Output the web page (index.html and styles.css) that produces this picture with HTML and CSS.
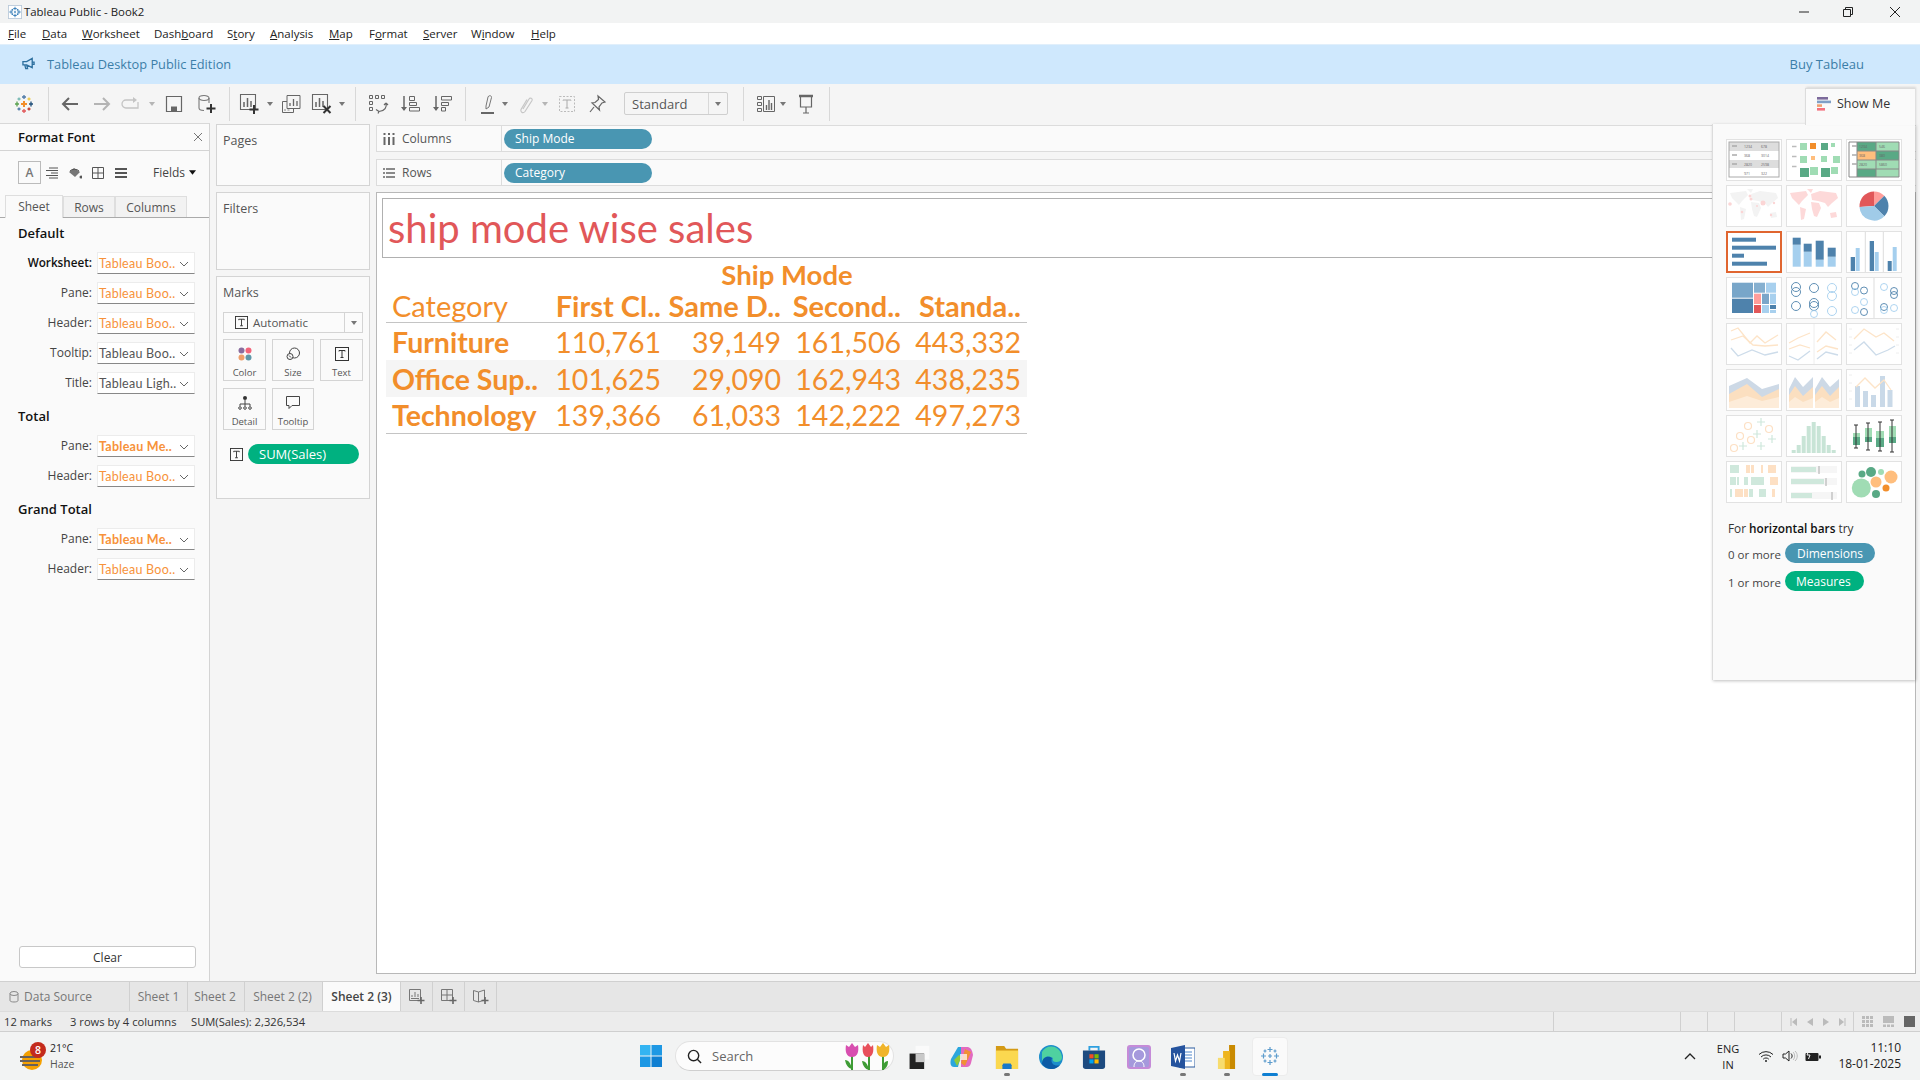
FILE: index.html
```html
<!DOCTYPE html>
<html lang="en">
<head>
<meta charset="utf-8">
<title>Tableau Public - Book2</title>
<link rel="stylesheet" href="styles.css">
</head>
<body>
<svg class="defs" width="0" height="0" aria-hidden="true">
  <defs>
    <symbol id="plus" viewBox="0 0 10 10"><path d="M5 0v10M0 5h10" stroke="currentColor" stroke-width="2"/></symbol>
    <symbol id="tt" viewBox="0 0 14 14"><rect x=".5" y=".5" width="13" height="13" fill="none" stroke="currentColor"/><path d="M4 4.500V3.500h6v1M7 3.500v7M5.500 10.500h3" fill="none" stroke="currentColor"/></symbol>
    <symbol id="chev" viewBox="0 0 10 6"><path d="M1 1l4 4 4-4" fill="none" stroke="#666"/></symbol>
    <symbol id="drop" viewBox="0 0 6 4"><path d="M0 0h6L3 4z" fill="#777"/></symbol>
    <symbol id="world" viewBox="0 0 56 42"><path d="M4 8L20 6 22 10 16 16 13 20 10 17 6 13zM14 22L20 24 18 34 15 35zM25 9L34 6 50 8 52 13 46 18 42 22 39 18 32 16 26 15zM25 17L33 18 35 23 31 32 28 31 26 24zM44 28L50 27 51 32 45 33zM21 4L27 4 25 8z"/></symbol>
  </defs>
</svg>
<div class="app">
  <header class="titlebar">
    <svg class="title-ico" viewBox="0 0 16 16"><rect x=".5" y=".5" width="15" height="15" fill="#fff" stroke="#b9c9d9"/><path d="M8 2v4M6 4h4M8 10v4M6 12h4M3.500 6v4M1.500 8h4M12.500 6v4M10.500 8h4M5 4.500v2M4 5.500h2M11 4.500v2M10 5.500h2M5 9.500v2M4 10.500h2M11 9.500v2M10 10.500h2M8 7v2M7 8h2" stroke="#2e78b5" stroke-width="1"/></svg>
    <span class="title-text">Tableau Public - Book2</span>
    <div class="winctl">
      <svg class="wc-min" viewBox="0 0 10 10"><path d="M0 5h10" stroke="#222"/></svg>
      <svg class="wc-max" viewBox="0 0 10 10"><path d="M.5 2.500h7v7h-7zM2.500 2.500v-2h7v7h-2" fill="none" stroke="#222"/></svg>
      <svg class="wc-close" viewBox="0 0 10 10"><path d="M0 0l10 10M10 0L0 10" stroke="#222"/></svg>
    </div>
  </header>

  <nav class="menubar">
    <span class="m m-file"><u>F</u>ile</span>
    <span class="m m-data"><u>D</u>ata</span>
    <span class="m m-ws"><u>W</u>orksheet</span>
    <span class="m m-db">Dash<u>b</u>oard</span>
    <span class="m m-st">S<u>t</u>ory</span>
    <span class="m m-an"><u>A</u>nalysis</span>
    <span class="m m-map"><u>M</u>ap</span>
    <span class="m m-fo">F<u>o</u>rmat</span>
    <span class="m m-se"><u>S</u>erver</span>
    <span class="m m-wi">W<u>i</u>ndow</span>
    <span class="m"><u>H</u>elp</span>
  </nav>

  <div class="banner">
    <svg class="mega" viewBox="0 0 14 14"><path d="M1 5h4l6-3.500v10L5 8.500H1zM3 8.500l1 4h2l-1-4M11 5.500h2v2.500h-2" fill="none" stroke="#2d6f9e" stroke-width="1.400"/></svg>
    <span class="banner-text">Tableau Desktop Public Edition</span>
    <span class="buy">Buy Tableau</span>
  </div>

  <div class="toolbar">
    <svg class="ti" viewBox="0 0 20 20"><g stroke-width="1.300"><path d="M10 7v6M7 10h6" stroke="#f28e2b" stroke-width="2"/><path d="M10 1v4M8 3h4" stroke="#4e79a7"/><path d="M10 15v4M8 17h4" stroke="#e15759"/><path d="M3 7.500v5M1 10h4" stroke="#59a14f"/><path d="M17 7.500v5M15 10h4" stroke="#1f4e79"/><path d="M5 3.500v3M3.500 5h3" stroke="#76b7b2"/><path d="M15 3.500v3M13.500 5h3" stroke="#edc948"/><path d="M5 13.500v3M3.500 15h3" stroke="#4e79a7"/><path d="M15 13.500v3M13.500 15h3" stroke="#c0392b"/></g></svg>
    <i class="sep"></i>
    <svg class="ti" viewBox="0 0 20 20"><path d="M18 10H3M9 4l-6 6 6 6" fill="none" stroke="#666" stroke-width="2"/></svg>
    <svg class="ti" viewBox="0 0 20 20"><path d="M2 10h15M11 4l6 6-6 6" fill="none" stroke="#b4b4b4" stroke-width="2"/></svg>
    <svg class="ti" viewBox="0 0 20 20"><path d="M14 6H5a3.500 3.500 0 0 0 0 8h12V8" fill="none" stroke="#c4c4c4" stroke-width="1.300"/><path d="M12 3l4 3-4 3z" fill="#c4c4c4"/></svg>
    <svg class="td" viewBox="0 0 6 4"><use href="#drop" class="dim"/></svg>
    <svg class="ti" viewBox="0 0 20 20"><path d="M2.500 2.500h15v15h-15z" fill="none" stroke="#666" stroke-width="1.200"/><path d="M7 12.500h6v5H7z" fill="#666"/></svg>
    <svg class="ti" viewBox="0 0 20 20"><ellipse cx="7" cy="4" rx="5" ry="2.500" fill="none" stroke="#777" stroke-width="1.100"/><path d="M2 4v10c0 2 2 2.500 5 2.500M12 4v5" fill="none" stroke="#777" stroke-width="1.100"/><path d="M14 10v9M9.500 14.500h9" stroke="#333" stroke-width="2"/></svg>
    <i class="sep"></i>
    <svg class="ti" viewBox="0 0 20 20"><path d="M.5 .5h15v15H.5z" fill="none" stroke="#666" stroke-width="1.100"/><path d="M4 8v5M7.500 4v9M11 7v6" stroke="#666" stroke-width="1.500"/><path d="M14 11v9M9.500 15.500h9" stroke="#333" stroke-width="2"/></svg>
    <svg class="td" viewBox="0 0 6 4"><use href="#drop"/></svg>
    <svg class="ti" viewBox="0 0 20 20"><path d="M6 1.500h13v13H6z" fill="#f5f5f5" stroke="#666"/><path d="M9 9v3M12.500 5v7M16 7v5" stroke="#666" stroke-width="1.300"/><path d="M1.500 7.500H6M1.500 7.500v11h11v-4" fill="none" stroke="#666"/><path d="M3 16h2M6.500 16h2" stroke="#888"/></svg>
    <svg class="ti" viewBox="0 0 20 20"><path d="M.5 .5h15v15H.5z" fill="none" stroke="#666" stroke-width="1.100"/><path d="M4 8v5M7.500 4v9M11 7v6" stroke="#666" stroke-width="1.500"/><path d="M11.500 12l7 7M18.500 12l-7 7" stroke="#333" stroke-width="2"/></svg>
    <svg class="td" viewBox="0 0 6 4"><use href="#drop"/></svg>
    <i class="sep"></i>
    <svg class="ti" viewBox="0 0 20 20"><g fill="none" stroke="#666"><path d="M1.500 1.500h3v3h-3zM7.500 1.500h3v3h-3zM13.500 1.500h3v3h-3zM1.500 7.500h3v3h-3zM1.500 13.500h3v3h-3z"/><path d="M18 9c1 4-1 8-7 8.500M8 15.500l3 2-1 2M18 9l-2 2M18 9l2 2" stroke-width="1.200"/></g></svg>
    <svg class="ti" viewBox="0 0 20 20"><path d="M4 2v14" stroke="#666" stroke-width="1.500"/><path d="M1 13l3 4 3-4z" fill="#666"/><path d="M9.500 2.500h5v4h-5zM9.500 8.500h7v3h-7zM9.500 13.500h10v3.500h-10z" fill="none" stroke="#666"/></svg>
    <svg class="ti" viewBox="0 0 20 20"><path d="M4 2v14" stroke="#666" stroke-width="1.500"/><path d="M1 13l3 4 3-4z" fill="#666"/><path d="M9.500 2.500h10v3.500h-10zM9.500 8.500h7v3h-7zM9.500 13.500h4v3.500h-4z" fill="none" stroke="#666"/></svg>
    <i class="sep"></i>
    <svg class="ti" viewBox="0 0 20 20"><path d="M8 12l2-9c.5-2 4-1.500 3.500.5L11 13l-3 2z" fill="none" stroke="#777"/><path d="M3 19h13" stroke="#666" stroke-width="2"/></svg>
    <svg class="td" viewBox="0 0 6 4"><use href="#drop"/></svg>
    <svg class="ti" viewBox="0 0 20 20"><path d="M7 15l6-10c1-2 4-.5 3 1.500l-7 11c-2 2.500-5 .5-4-2l6-10" fill="none" stroke="#c6c6c6" stroke-width="1.200"/></svg>
    <svg class="td" viewBox="0 0 6 4"><use href="#drop" class="dim"/></svg>
    <svg class="ti" viewBox="0 0 20 20"><rect x="2.500" y="2.500" width="15" height="15" fill="none" stroke="#bbb" stroke-dasharray="2 1.500"/><path d="M6 6.500V6h8v.5M10 6v8M8.500 14h3" fill="none" stroke="#aaa"/></svg>
    <svg class="ti" viewBox="0 0 20 20"><path d="M11 2l7 6-3 1-3 4 .5 3-7.500-7 3-.5 3.500-3zM7 13l-4 5" fill="none" stroke="#666" stroke-width="1.200"/></svg>
    <div class="fit"><span class="fit-label">Standard</span><span class="fit-arrow"><svg class="td" viewBox="0 0 6 4"><use href="#drop"/></svg></span></div>
    <i class="sep"></i>
    <svg class="ti" viewBox="0 0 20 20"><path d="M1.500 2.500h4v3h-4zM1.500 8.500h4v3h-4zM1.500 14.500h4v3h-4zM7.500 2.500h11v15h-11z" fill="none" stroke="#666"/><path d="M10.500 11v5M13 6v10M15.500 9v7" stroke="#666" stroke-width="1.400"/></svg>
    <svg class="td" viewBox="0 0 6 4"><use href="#drop"/></svg>
    <svg class="ti" viewBox="0 0 20 20"><path d="M3 2h14" stroke="#666" stroke-width="2.500"/><path d="M4.500 3v10h11V3M10 13v6M7 19h6" fill="none" stroke="#666" stroke-width="1.200"/></svg>
    <i class="sep"></i>
  </div>

  <main class="main">
    <aside class="format">
      <div class="fmt-head"><strong>Format Font</strong><svg class="fmt-x" viewBox="0 0 8 8"><path d="M0 0l8 8M8 0L0 8" stroke="#777"/></svg></div>
      <div class="fmt-tools">
        <span class="fmt-a">A</span>
        <svg class="fi" viewBox="0 0 14 14"><path d="M4 2h9M1 4.500h12M6 7h7M1 9.500h12M4 12h9" stroke="#555"/></svg>
        <svg class="fi" viewBox="0 0 14 14"><path d="M1 6l5-4 6 4-5 5z" fill="#777"/><path d="M2 5a5 3 0 0 1 9 0" fill="none" stroke="#555"/><circle cx="13" cy="11" r="1.500" fill="#555"/></svg>
        <svg class="fi" viewBox="0 0 14 14"><path d="M1.500 1.500h11v11h-11zM7 1.500v11M1.500 7h11" fill="none" stroke="#555"/></svg>
        <svg class="fi" viewBox="0 0 14 14"><path d="M1 3h12M1 7h12M1 11h12" stroke="#555" stroke-width="2"/></svg>
        <span class="fmt-fields">Fields<svg class="fields-drop" viewBox="0 0 6 4"><path d="M0 0h6L3 4z" fill="#111"/></svg></span>
      </div>
      <div class="fmt-tabs">
        <span class="ftab ftab-on">Sheet</span>
        <span class="ftab ftab-rows">Rows</span>
        <span class="ftab ftab-cols">Columns</span>
      </div>
      <div class="fmt-body">
        <h3 class="fmt-h">Default</h3>
        <div class="frow"><label class="flabel flabel-on">Worksheet:</label><div class="fsel o">Tableau Boo..<svg class="chev"><use href="#chev"/></svg></div></div>
        <div class="frow"><label class="flabel">Pane:</label><div class="fsel o">Tableau Boo..<svg class="chev"><use href="#chev"/></svg></div></div>
        <div class="frow"><label class="flabel">Header:</label><div class="fsel o">Tableau Boo..<svg class="chev"><use href="#chev"/></svg></div></div>
        <div class="frow"><label class="flabel">Tooltip:</label><div class="fsel">Tableau Boo..<svg class="chev"><use href="#chev"/></svg></div></div>
        <div class="frow"><label class="flabel">Title:</label><div class="fsel">Tableau Ligh..<svg class="chev"><use href="#chev"/></svg></div></div>
        <h3 class="fmt-h fmt-h2">Total</h3>
        <div class="frow"><label class="flabel">Pane:</label><div class="fsel o b">Tableau Me..<svg class="chev"><use href="#chev"/></svg></div></div>
        <div class="frow"><label class="flabel">Header:</label><div class="fsel o">Tableau Boo..<svg class="chev"><use href="#chev"/></svg></div></div>
        <h3 class="fmt-h fmt-h2">Grand Total</h3>
        <div class="frow"><label class="flabel">Pane:</label><div class="fsel o b">Tableau Me..<svg class="chev"><use href="#chev"/></svg></div></div>
        <div class="frow"><label class="flabel">Header:</label><div class="fsel o">Tableau Boo..<svg class="chev"><use href="#chev"/></svg></div></div>
      </div>
      <button class="clear">Clear</button>
    </aside>

    <section class="cards">
      <div class="card card-pages"><span class="card-t">Pages</span></div>
      <div class="card card-filters"><span class="card-t">Filters</span></div>
      <div class="card card-marks">
        <span class="card-t">Marks</span>
        <div class="markdrop"><svg class="mt"><use href="#tt"/></svg><span>Automatic</span><span class="markdrop-arrow"><svg class="md"><use href="#drop"/></svg></span></div>
        <div class="markgrid">
          <div class="mbtn"><svg class="mi" viewBox="0 0 14 14"><circle cx="3.500" cy="3.500" r="3" fill="#8a6d9e"/><circle cx="10.500" cy="3.500" r="3" fill="#f2647a"/><circle cx="3.500" cy="10.500" r="3" fill="#ee9f6b"/><circle cx="10.500" cy="10.500" r="3" fill="#5f97a8"/></svg><span>Color</span></div>
          <div class="mbtn"><svg class="mi" viewBox="0 0 14 14"><circle cx="8.500" cy="6" r="5" fill="none" stroke="#444"/><circle cx="4" cy="9.500" r="3" fill="#f9f9f9" stroke="#444"/><path d="M3 8.500l2 2" stroke="#444"/></svg><span>Size</span></div>
          <div class="mbtn"><svg class="mi"><use href="#tt"/></svg><span>Text</span></div>
          <div class="mbtn"><svg class="mi" viewBox="0 0 14 14"><circle cx="7" cy="2" r="2" fill="#333"/><path d="M7 4v4M2 10V8h10v2M7 8v2" fill="none" stroke="#444"/><circle cx="2" cy="12" r="1.300" fill="none" stroke="#444"/><circle cx="7" cy="12" r="1.300" fill="none" stroke="#444"/><circle cx="12" cy="12" r="1.300" fill="none" stroke="#444"/></svg><span>Detail</span></div>
          <div class="mbtn"><svg class="mi" viewBox="0 0 14 14"><path d="M.5 .5h13v9H6l-3 3v-3H.5z" fill="none" stroke="#444"/></svg><span>Tooltip</span></div>
        </div>
        <div class="markpill"><svg class="mt"><use href="#tt"/></svg><span class="pill pill-g pill-sum">SUM(Sales)</span></div>
      </div>
    </section>

    <section class="work">
      <div class="shelf"><div class="shelf-l"><svg class="si" viewBox="0 0 12 12"><path d="M1.500 4v8M6 4v8M10.500 4v8M1.500 0v2M6 0v2M10.500 0v2" stroke="#666" stroke-width="2"/></svg>Columns</div><span class="pill pill-b pill-shelf">Ship Mode</span></div>
      <div class="shelf shelf-r"><div class="shelf-l"><svg class="si" viewBox="0 0 12 12"><path d="M3 2h9M3 6h9M3 10h9M0 2h2M0 6h2M0 10h2" stroke="#666" stroke-width="1.500"/></svg>Rows</div><span class="pill pill-b pill-shelf">Category</span></div>
      <div class="canvas">
        <div class="vtitle">ship mode wise sales</div>
        <div class="tbl">
          <div class="tr tr-top"><span class="shipmode">Ship Mode</span></div>
          <div class="tr tr-head"><span class="cat">Category</span><b>First Cl..</b><b>Same D..</b><b>Second..</b><b>Standa..</b></div>
          <div class="tr"><b class="rl">Furniture</b><span>110,761</span><span>39,149</span><span>161,506</span><span>443,332</span></div>
          <div class="tr tr-band"><b class="rl">Office Sup..</b><span>101,625</span><span>29,090</span><span>162,943</span><span>438,235</span></div>
          <div class="tr tr-last"><b class="rl">Technology</b><span>139,366</span><span>61,033</span><span>142,222</span><span>497,273</span></div>
        </div>
      </div>
    </section>

    <aside class="showme">
      <div class="sm-tab"><svg class="sm-ico" viewBox="0 0 14 14"><rect width="11" height="2.600" fill="#7d6b9c"/><rect y="3.600" width="14" height="2.600" fill="#7f9fc6"/><rect y="7.300" width="5" height="2.600" fill="#f0a070"/><rect y="11" width="8" height="2.600" fill="#f4717f"/></svg>Show Me</div>
      <div class="sm-grid">
        <svg class="thumb" viewBox="0 0 56 42"><rect class="fr" x=".5" y=".5" width="55" height="41"/><rect x="3" y="3" width="50" height="9" fill="#ddd"/><rect x="3" y="21" width="50" height="8" fill="#ddd"/><rect x="3" y="3" width="50" height="35" fill="none" stroke="#aaa"/><path d="M6 7h5M6 16h5M6 25h5" stroke="#aaa" stroke-width="1.500"/><g class="tiny"><text x="18" y="9">1234</text><text x="35" y="9">678</text><text x="18" y="18">368</text><text x="35" y="18">3014</text><text x="18" y="27">2820</text><text x="35" y="27">2598</text><text x="18" y="36">971</text><text x="35" y="36">322</text></g></svg>
        <svg class="thumb" viewBox="0 0 56 42"><rect class="fr" x=".5" y=".5" width="55" height="41"/><path d="M6 7.500h4.500M6 17.500h4.500M6 27.500h4.500" stroke="#bbb" stroke-width="1.500"/><g fill="#a0dcb4"><rect x="14" y="4" width="7" height="7"/><rect x="45" y="4" width="4" height="4"/><rect x="14" y="17" width="7" height="7"/><rect x="35" y="17" width="6" height="6"/><rect x="47" y="17" width="7" height="7"/><rect x="24" y="28" width="8" height="8"/><rect x="45" y="28" width="7" height="7"/></g><g fill="#59a985"><rect x="35" y="4" width="7" height="7"/><rect x="14" y="29" width="9" height="9"/><rect x="35" y="29" width="9" height="9"/></g><rect x="24" y="4" width="6" height="6" fill="#f28e2b"/><rect x="25" y="17" width="4" height="4" fill="#ffbe7d"/></svg>
        <svg class="thumb" viewBox="0 0 56 42"><rect class="fr" x=".5" y=".5" width="55" height="41"/><rect x="11" y="3" width="19" height="9" fill="#59a985"/><rect x="30" y="3" width="23" height="9" fill="#a0dcb4"/><rect x="11" y="12" width="19" height="9" fill="#ffbe7d"/><rect x="30" y="12" width="23" height="9" fill="#59a985"/><rect x="11" y="21" width="19" height="9" fill="#a0dcb4"/><rect x="30" y="21" width="23" height="9" fill="#a0dcb4"/><rect x="11" y="30" width="19" height="8" fill="#59a985"/><rect x="30" y="30" width="23" height="8" fill="#a0dcb4"/><path d="M3 3h50v35H3zM11 3v35M30 3v35M11 12h42M11 21h42M11 30h42" fill="none" stroke="#888"/><path d="M6 7h5M6 16h5M6 25h5" stroke="#aaa" stroke-width="1.500"/><g class="tiny"><text x="13" y="9">1234</text><text x="33" y="9">546</text><text x="13" y="18">368</text><text x="33" y="18">380</text><text x="13" y="27">2820</text><text x="33" y="27">5860</text></g></svg>
        <svg class="thumb" viewBox="0 0 56 42"><rect class="fr" x=".5" y=".5" width="55" height="41"/><use href="#world" width="56" height="42" fill="#f3f3f3"/><g fill="#fbd5d5"><circle cx="37" cy="18" r="2.500"/><circle cx="25" cy="14" r="1.500"/><circle cx="24" cy="11" r="1.500"/><circle cx="4" cy="19" r="1.800"/><circle cx="45" cy="30" r="1.200"/><circle cx="16" cy="27" r="1.300"/><circle cx="31" cy="21" r="1"/><circle cx="48" cy="18" r="1.200"/></g></svg>
        <svg class="thumb" viewBox="0 0 56 42"><rect class="fr" x=".5" y=".5" width="55" height="41"/><use href="#world" width="56" height="42" fill="#fdd9d9"/></svg>
        <svg class="thumb" viewBox="0 0 56 42"><rect class="fr" x=".5" y=".5" width="55" height="41"/><path d="M28 21L13.500 22A14.500 14.500 0 0 1 28 6.500z" fill="#e15759"/><path d="M28 21V6.500A14.500 14.500 0 0 1 38.300 10.800z" fill="#ff9d9a"/><path d="M28 21L38.300 10.800A14.500 14.500 0 0 1 38.300 31.200z" fill="#4e82ac"/><path d="M28 21L38.300 31.200A14.500 14.500 0 0 1 13.500 22z" fill="#a0cbe8"/></svg>

        <svg class="thumb" viewBox="0 0 56 42"><rect x="1" y="1" width="54" height="40" fill="#fff" stroke="#e0652f" stroke-width="2"/><g fill="#4e82ac"><rect x="6" y="6.700" width="24" height="4"/><rect x="6" y="14.700" width="44" height="4"/><rect x="6" y="22.700" width="12" height="4"/><rect x="6" y="30.700" width="35" height="4"/></g></svg>
        <svg class="thumb" viewBox="0 0 56 42"><rect class="fr" x=".5" y=".5" width="55" height="41"/><g fill="#a5cfee"><rect x="6.700" y="13.700" width="8" height="22"/><rect x="17.700" y="20.700" width="8" height="15"/><rect x="29.700" y="28.700" width="8" height="7"/><rect x="41.700" y="25.700" width="8" height="10"/></g><g fill="#4e82ac"><rect x="6.700" y="6.700" width="8" height="7"/><rect x="17.700" y="12.700" width="8" height="8"/><rect x="29.700" y="9.700" width="8" height="19"/><rect x="41.700" y="16.700" width="8" height="9"/></g></svg>
        <svg class="thumb" viewBox="0 0 56 42"><rect class="fr" x=".5" y=".5" width="55" height="41"/><path d="M19.300 1v40M37.300 1v40" stroke="#ddd"/><g fill="#4e82ac"><rect x="4.700" y="26" width="4.300" height="14"/><rect x="23.700" y="10" width="4.300" height="30"/><rect x="41.700" y="30" width="4" height="10"/></g><g fill="#a5cfee"><rect x="9.700" y="17" width="4" height="23"/><rect x="28.700" y="21" width="4" height="19"/><rect x="46.700" y="16" width="4" height="24"/></g></svg>
        <svg class="thumb" viewBox="0 0 56 42"><rect class="fr" x=".5" y=".5" width="55" height="41"/><rect x="6" y="5.700" width="21" height="15" fill="#78a6c9"/><rect x="6" y="21.700" width="21" height="14.300" fill="#4e82ac"/><rect x="28" y="5.700" width="11" height="10" fill="#86b0d0"/><rect x="40" y="5.700" width="10" height="10" fill="#a8d0ee"/><rect x="28" y="16.700" width="7" height="10.300" fill="#ff9d9a"/><rect x="36" y="16.700" width="7" height="10.300" fill="#7ba6c9"/><rect x="44" y="16.700" width="6" height="10.300" fill="#a8d0ee"/><rect x="28" y="28" width="7" height="8" fill="#e15759"/><rect x="36" y="28" width="7" height="8" fill="#a8d0ee"/><rect x="44" y="28" width="6" height="4" fill="#4e82ac"/><rect x="44" y="33" width="6" height="3" fill="#a8d0ee"/></svg>
        <svg class="thumb" viewBox="0 0 56 42"><rect class="fr" x=".5" y=".5" width="55" height="41"/><g fill="none" stroke="#4e82ac" stroke-width=".9"><circle cx="10" cy="10" r="4.500"/><circle cx="10" cy="15" r="4.500"/><circle cx="10" cy="29" r="4.500"/><circle cx="28" cy="11" r="4.500"/><circle cx="28" cy="26" r="4.500"/><circle cx="28" cy="29" r="4.500"/></g><g fill="none" stroke="#a5cfee" stroke-width=".9"><circle cx="46" cy="11" r="4.500"/><circle cx="46" cy="19" r="4.500"/><circle cx="46" cy="34" r="4.500"/><circle cx="28" cy="37" r="3.500"/></g></svg>
        <svg class="thumb" viewBox="0 0 56 42"><rect class="fr" x=".5" y=".5" width="55" height="41"/><path d="M28 1v40" stroke="#ddd"/><g fill="none" stroke="#4e82ac" stroke-width=".9"><circle cx="9" cy="9" r="3.500"/><circle cx="18" cy="13.500" r="3.500"/><circle cx="18" cy="35" r="3.500"/><circle cx="48" cy="14" r="3.500"/><circle cx="48" cy="18" r="3.500"/><circle cx="38" cy="30" r="3.500"/></g><g fill="none" stroke="#a5cfee" stroke-width=".9"><circle cx="9" cy="15" r="3.500"/><circle cx="18" cy="25" r="3.500"/><circle cx="9" cy="33" r="3.500"/><circle cx="38" cy="10" r="3.500"/><circle cx="38" cy="33" r="3.500"/><circle cx="48" cy="31" r="3.500"/></g></svg>

        <svg class="thumb" viewBox="0 0 56 42"><rect class="fr" x=".5" y=".5" width="55" height="41"/><g class="ln"><polyline class="lo" points="5,8 12,5 24,20 31,13 39,20 52,12"/><polyline class="lo" points="5,17 17,13 27,22 39,23 52,22"/><polyline class="lb" points="5,25 12,33 26,27 39,32 52,29"/></g></svg>
        <svg class="thumb" viewBox="0 0 56 42"><rect class="fr" x=".5" y=".5" width="55" height="41"/><path d="M28 1v40" stroke="#eee"/><g class="ln"><polyline class="lo" points="3,20 12,15 24,10"/><polyline class="lo" points="3,26 14,22 24,25"/><polyline class="lb" points="3,33 12,37 24,28"/><polyline class="lo" points="31,19 40,9 50,17"/><polyline class="lo" points="31,29 40,23 52,26"/><polyline class="lb" points="31,36 40,29 52,32"/></g></svg>
        <svg class="thumb" viewBox="0 0 56 42"><rect class="fr" x=".5" y=".5" width="55" height="41"/><path d="M3 6h3M3 14h3M3 22h3M3 30h3M50 6h3M50 14h3M50 22h3M50 30h3" stroke="#eee"/><g class="ln"><polyline class="lo" points="8,16 18,6 30,14 38,10 48,18"/><polyline class="lb" points="8,27 18,19 30,32 42,27 49,23"/></g></svg>

        <svg class="thumb" viewBox="0 0 56 42"><rect class="fr" x=".5" y=".5" width="55" height="41"/><path d="M3 17L21 9 36 20 53 15V39H3z" fill="#cdd9e6"/><path d="M3 25L21 15 36 28 53 20V39H3z" fill="#fbdfc0"/><path d="M3 33L21 27 36 32 53 28V39H3z" fill="#fdecd9"/></svg>
        <svg class="thumb" viewBox="0 0 56 42"><rect class="fr" x=".5" y=".5" width="55" height="41"/><path d="M3 20L9 8 17 18 27 8V39H3z" fill="#cdd9e6"/><path d="M3 26L9 17 17 27 27 18V39H3z" fill="#fbdfc0"/><path d="M3 33L9 28 17 33 27 29V39H3z" fill="#fdecd9"/><path d="M29 20L36 8 44 18 53 10V39H29z" fill="#cdd9e6"/><path d="M29 26L36 17 44 27 53 18V39H29z" fill="#fbdfc0"/><path d="M29 33L36 28 44 33 53 29V39H29z" fill="#fdecd9"/></svg>
        <svg class="thumb" viewBox="0 0 56 42"><rect class="fr" x=".5" y=".5" width="55" height="41"/><path d="M3 6h3M3 14h3M3 22h3M3 30h3" stroke="#eee"/><g fill="#c9d9e8"><rect x="9" y="17" width="5" height="21"/><rect x="17" y="22" width="5" height="16"/><rect x="25" y="26" width="5" height="12"/><rect x="34" y="7" width="5" height="31"/><rect x="41.500" y="21" width="5" height="17"/></g><polyline class="lo" fill="none" points="10,18 19,9 29,19 38,11 45,21"/></svg>

        <svg class="thumb" viewBox="0 0 56 42"><rect class="fr" x=".5" y=".5" width="55" height="41"/><g fill="none" stroke="#fde0c4" stroke-width="1.200"><circle cx="8" cy="33" r="3.500"/><circle cx="14" cy="21" r="3.500"/><circle cx="22" cy="11" r="3.500"/><circle cx="25" cy="25" r="3.500"/><circle cx="43" cy="14" r="3.500"/></g><path d="M31 7h8M35 3v8M27 19h8M31 15v8M13 31h8M17 27v8M31 31h8M35 27v8M42 24h8M46 20v8" stroke="#cfe8dc" stroke-width="1.200"/></svg>
        <svg class="thumb" viewBox="0 0 56 42"><rect class="fr" x=".5" y=".5" width="55" height="41"/><g fill="#c8e4d6"><rect x="5.700" y="35" width="4" height="3"/><rect x="10.700" y="30" width="4" height="8"/><rect x="15.700" y="21" width="4" height="17"/><rect x="20.700" y="11" width="4" height="27"/><rect x="25.700" y="7" width="4" height="31"/><rect x="30.700" y="11" width="4" height="27"/><rect x="35.700" y="21" width="4" height="17"/><rect x="40.700" y="30" width="4" height="8"/><rect x="45.700" y="35" width="4" height="3"/></g></svg>
        <svg class="thumb" viewBox="0 0 56 42"><rect class="fr" x=".5" y=".5" width="55" height="41"/><g fill="#a0dcb4"><rect x="7" y="18" width="7" height="4"/><rect x="19" y="13" width="7" height="9"/><rect x="30" y="16" width="8" height="7"/><rect x="43" y="11" width="7" height="11"/></g><g fill="#59a985"><rect x="7" y="22" width="7" height="8"/><rect x="19" y="22" width="7" height="5"/><rect x="30" y="23" width="8" height="9"/><rect x="43" y="22" width="7" height="6"/></g><path d="M10 10v23M8 10h4M8 33h4M22 8v27M20 8h4M20 35h4M34 7v29M32 7h4M32 36h4M46 5v32M44 5h4M44 37h4" stroke="#333" fill="none"/></svg>

        <svg class="thumb" viewBox="0 0 56 42"><rect class="fr" x=".5" y=".5" width="55" height="41"/><g fill="#cfe8dc"><rect x="4" y="4" width="9" height="8"/><rect x="4" y="16" width="6" height="8"/><rect x="11" y="16" width="2" height="8"/><rect x="18" y="16" width="4" height="8"/><rect x="25" y="16" width="13" height="8"/><rect x="4" y="28" width="2" height="8"/><rect x="23" y="28" width="4" height="8"/><rect x="33" y="28" width="7" height="8"/></g><g fill="#fde0c4"><rect x="20" y="4" width="4" height="8"/><rect x="25" y="4" width="3" height="8"/><rect x="35" y="4" width="2" height="8"/><rect x="42" y="4" width="8" height="8"/><rect x="44" y="16" width="8" height="8"/><rect x="9" y="28" width="8" height="8"/><rect x="18" y="28" width="4" height="8"/><rect x="46" y="28" width="3" height="8"/></g></svg>
        <svg class="thumb" viewBox="0 0 56 42"><rect class="fr" x=".5" y=".5" width="55" height="41"/><g fill="#f6f6f6"><rect x="5" y="5" width="46" height="7"/><rect x="5" y="17" width="46" height="7"/><rect x="5" y="31" width="46" height="7"/></g><g fill="#cfe8dc"><rect x="5" y="6" width="25" height="5"/><rect x="5" y="18" width="33" height="5"/><rect x="5" y="32" width="21" height="5"/></g><path d="M33 5v8M40 17v8M46 31v8" stroke="#aaa"/></svg>
        <svg class="thumb" viewBox="0 0 56 42"><rect class="fr" x=".5" y=".5" width="55" height="41"/><circle cx="15.300" cy="27" r="9.500" fill="#a0dcb4"/><circle cx="16" cy="13" r="3.500" fill="#59a985"/><circle cx="25" cy="11" r="5" fill="#59a985"/><circle cx="35" cy="11" r="3" fill="#a0dcb4"/><circle cx="45" cy="16" r="6.500" fill="#ffbe7d"/><circle cx="30" cy="21" r="5.500" fill="#ffbe7d"/><circle cx="40" cy="27" r="3.500" fill="#f28e2b"/><circle cx="30" cy="33" r="4" fill="#59a985"/></svg>
      </div>
      <p class="sm-for">For <b>horizontal bars</b> try</p>
      <div class="sm-row"><span class="sm-n">0 or more</span><span class="pill pill-b pill-dim">Dimensions</span></div>
      <div class="sm-row"><span class="sm-n">1 or more</span><span class="pill pill-g pill-mea">Measures</span></div>
    </aside>
  </main>

  <div class="tabs">
    <span class="tab tab-ds"><svg class="ds" viewBox="0 0 10 12"><ellipse cx="5" cy="2.500" rx="4" ry="2" fill="none" stroke="#888"/><path d="M1 2.500v7c0 2 8 2 8 0v-7" fill="none" stroke="#888"/></svg>Data Source</span>
    <span class="tab tab-1">Sheet 1</span>
    <span class="tab tab-2">Sheet 2</span>
    <span class="tab tab-3">Sheet 2 (2)</span>
    <span class="tab tab-on">Sheet 2 (3)</span>
    <span class="tab tab-ic"><svg class="nt" viewBox="0 0 16 16"><path d="M.5 .5h11v11H.5zM3 8V6M6 8V3M9 8V5M2 9.500h8" fill="none" stroke="#777"/><path d="M12 8v7M8.500 11.500h7" stroke="#666" stroke-width="1.600"/></svg></span>
    <span class="tab tab-ic"><svg class="nt" viewBox="0 0 16 16"><path d="M.5 .5h11v11H.5zM.5 6h11M6 .5v11" fill="none" stroke="#777"/><path d="M12 8v7M8.500 11.500h7" stroke="#666" stroke-width="1.600"/></svg></span>
    <span class="tab tab-ic"><svg class="nt" viewBox="0 0 16 16"><path d="M.5 1.500l5 1.500 6-2v10l-6 2-5-1.500zM5.500 3v10" fill="none" stroke="#777"/><path d="M12 8v7M8.500 11.500h7" stroke="#666" stroke-width="1.600"/></svg></span>
  </div>

  <div class="status">
    <span class="st st-a">12 marks</span>
    <span class="st st-b">3 rows by 4 columns</span>
    <span class="st">SUM(Sales): 2,326,534</span>
    <div class="st-cells">
      <i class="cell c1"></i><i class="cell c2"></i><i class="cell c2"></i><i class="cell c3"></i>
      <div class="cell nav">
        <svg viewBox="0 0 8 10"><path d="M1 1v8" stroke="#bbb"/><path d="M7 1v8L2 5z" fill="#bbb"/></svg>
        <svg viewBox="0 0 8 10"><path d="M7 1v8L1 5z" fill="#bbb"/></svg>
        <svg viewBox="0 0 8 10"><path d="M1 1v8l6-4z" fill="#bbb"/></svg>
        <svg viewBox="0 0 8 10"><path d="M7 1v8" stroke="#bbb"/><path d="M1 1v8l5-4z" fill="#bbb"/></svg>
      </div>
      <div class="views">
        <svg viewBox="0 0 11 11"><path d="M0 0h3v3H0zM4 0h3v3H4zM8 0h3v3H8zM0 4h3v3H0zM4 4h3v3H4zM8 4h3v3H8zM0 8h3v3H0zM4 8h3v3H4zM8 8h3v3H8z" fill="#bbb"/></svg>
        <svg viewBox="0 0 11 11"><path d="M0 0h11v7H0zM0 8.500h3V11H0zM4 8.500h3V11H4zM8 8.500h3V11H8z" fill="#bbb"/></svg>
        <svg viewBox="0 0 11 11"><path d="M0 0h11v11H0z" fill="#666"/></svg>
      </div>
    </div>
  </div>

  <footer class="taskbar">
    <div class="weather">
      <div class="wx"><svg class="wx-ico" viewBox="0 0 22 24"><circle cx="12" cy="12" r="10" fill="#f5a000"/><path d="M0 9h20M0 13h20M2 17h16" stroke="#69605a" stroke-width="1.800"/></svg><span class="wx-badge">8</span></div>
      <div class="wx-t"><span>21°C</span><span class="haze">Haze</span></div>
    </div>
    <div class="center">
      <svg class="start" viewBox="0 0 22 22"><path d="M0 0h10.500v10.500H0z" fill="#33b4f2"/><path d="M11.500 0H22v10.500H11.500z" fill="#1e98e4"/><path d="M0 11.500h10.500V22H0z" fill="#1e98e4"/><path d="M11.500 11.500H22V22H11.500z" fill="#0f7fd2"/></svg>
      <div class="search">
        <svg class="s-ico" viewBox="0 0 16 16"><circle cx="7" cy="7" r="5.500" fill="none" stroke="#222" stroke-width="1.500"/><path d="M11 11l4 4" stroke="#222" stroke-width="1.500"/></svg>
        <span class="s-text">Search</span>
        <svg class="tulips" viewBox="0 0 48 28"><g fill="#3e9c35"><path d="M9 14h2v14H9zM26 14h2v14h-2zM40 14h2v14h-2z"/><path d="M3 18c4 0 6 4 7 9-4-1-6-4-7-9zM20 19c4 0 6 4 7 9-4-1-6-4-7-9zM46 19c-4 0-5 4-6 9 4-1 6-4 6-9z"/></g><path d="M4 3l3 2 3-4 3 4 3-2c1 6 0 12-6 12S3 9 4 3z" fill="#d84fb0"/><path d="M21 3l2 2 3-4 3 4 2-2c1 6 0 12-5 12s-6-6-5-12z" fill="#e8505b"/><path d="M35 3l3 2 3-4 3 4 3-2c1 6 0 12-6 12s-7-6-6-12z" fill="#f0b429"/></svg>
      </div>
      <svg class="tk tk-tv" viewBox="0 0 24 28"><path d="M8 1h16v16H8z" fill="#fafafa"/><path d="M1 10h17v18H1z" fill="#222"/><path d="M8 10h10v10H8z" fill="#c9c9c9"/></svg>
      <svg class="tk tk-co" viewBox="0 0 24 24"><path d="M8 2h5l-5 20H4C0 22 0 17 1 14z" fill="#2ba6dd"/><path d="M11 2h6c3 0 5 2 6 8l-2 8c-1 4-3 4-6 4h-4z" fill="#e36ac0"/><path d="M4 15l5-5 3 2-5 9z" fill="#8fc93a"/><path d="M15 4l6 3-6 14-4-3z" fill="#f09035"/><path d="M10 9h7v6h-7z" fill="#fff" opacity=".7"/></svg>
      <svg class="tk tk-ex" viewBox="0 0 24 26"><path d="M0 1h9l2 3h13v22H0z" fill="#d49a15"/><path d="M0 6h24v20H0z" fill="#fbd84f"/><path d="M8 20h8l1 2v4H7v-4z" fill="#1a78c8"/></svg>
      <svg class="tk tk-ed" viewBox="0 0 24 24"><circle cx="12" cy="12" r="12" fill="#1d8ecb"/><path d="M3 7c4-8 18-8 20 5 0 4-3 5-6 5-3 0-4-2-3-4-4-3-11-2-11 6z" fill="#4fd1a0"/><path d="M3 19c0-7 6-9 10-6-2 5 2 9 8 7-5 6-14 5-18-1z" fill="#0c5ba6"/></svg>
      <svg class="tk tk-st" viewBox="0 0 24 26"><path d="M7 6V2h10v4" fill="none" stroke="#2ea0e0" stroke-width="2"/><path d="M0 6h24v17c0 2-1 3-3 3H3c-2 0-3-1-3-3z" fill="#1d4a7f"/><path d="M7 10h4.500v4.500H7z" fill="#f25022"/><path d="M12.500 10H17v4.500h-4.500z" fill="#7fba00"/><path d="M7 15.500h4.500V20H7z" fill="#00a4ef"/><path d="M12.500 15.500H17V20h-4.500z" fill="#ffb900"/></svg>
      <svg class="tk tk-q" viewBox="0 0 24 24"><rect width="24" height="24" rx="3" fill="#c58bd8"/><rect x="2" y="2" width="20" height="20" rx="2" fill="#8fa3e0" opacity=".6"/><circle cx="12" cy="10" r="6" fill="none" stroke="#fff" stroke-width="1.500"/><path d="M7 22c0-4 2-6 5-6s5 2 5 6" fill="none" stroke="#fff"/></svg>
      <svg class="tk tk-wd" viewBox="0 0 24 24"><path d="M8 3h16v19H8z" fill="#fff" stroke="#2a5a9f"/><path d="M12 7h9M12 10h9M12 13h9M12 16h9" stroke="#4e86cc"/><path d="M0 3l14-3v24L0 21z" fill="#25539e"/><path d="M3 8l1.500 8 2-6 2 6L10 8" fill="none" stroke="#fff" stroke-width="1.200"/></svg>
      <svg class="tk tk-pb" viewBox="0 0 20 28"><rect x="13" y="0" width="7" height="28" fill="#c98a00"/><rect x="6" y="7" width="8" height="21" fill="#eeb51f"/><rect x="0" y="15" width="8" height="13" fill="#f7dc6e"/></svg>
      <div class="tk-tb"><svg class="tk-tb-i" viewBox="0 0 20 20"><path d="M10 1v5M7.500 3.500h5M10 14v5M7.500 16.500h5M3.500 7.500v5M1 10h5M16.500 7.500v5M14 10h5M5 3.500v3M3.500 5h3M15 3.500v3M13.500 5h3M5 13.500v3M3.500 15h3M15 13.500v3M13.500 15h3M10 8v4M8 10h4" stroke="#5d9ccd" stroke-width="1.200"/></svg></div>
      <i class="dot dot-ex"></i><i class="dot dot-wd"></i><i class="dot dot-pb"></i><i class="bluebar"></i>
    </div>
    <div class="tray">
      <svg class="t-chev" viewBox="0 0 12 7"><path d="M1 6l5-5 5 5" fill="none" stroke="#222" stroke-width="1.300"/></svg>
      <div class="t-lang"><span>ENG</span><span>IN</span></div>
      <svg class="t-wifi" viewBox="0 0 16 12"><path d="M1 4.500a10 10 0 0 1 14 0M3 7a7 7 0 0 1 10 0M5.200 9.200a3.800 3.800 0 0 1 5.600 0" fill="none" stroke="#222"/><circle cx="8" cy="11" r="1" fill="#222"/></svg>
      <svg class="t-vol" viewBox="0 0 16 12"><path d="M1 4h2.500L7 1v10L3.500 8H1z" fill="none" stroke="#222"/><path d="M9 3.500c1.500 1.500 1.500 3.500 0 5" fill="none" stroke="#222"/><path d="M11 2c2.200 2 2.200 6 0 8M13 1c3 2.700 3 7.300 0 10" fill="none" stroke="#bbb"/></svg>
      <svg class="t-bat" viewBox="0 0 16 12"><rect x=".5" y="3" width="13" height="8" rx="1" fill="#222"/><path d="M14 5.500h2v3h-2z" fill="#222"/><path d="M4 0L2 5h3L3.500 9" fill="none" stroke="#f3f3f3"/></svg>
      <div class="t-time"><span>11:10</span><span>18-01-2025</span></div>
    </div>
  </footer>
</div>
</body>
</html>
```

FILE: styles.css
```css
* { box-sizing: border-box; }
html, body { margin: 0; padding: 0; }
body { font-family: "Open Sans", "Noto Sans", sans-serif; font-size: 12px; color: #222; background: #fff; }
.defs { position: absolute; }
.app { position: relative; width: 1920px; height: 1080px; overflow: hidden; display: flex; flex-direction: column; }

/* window chrome */
.titlebar { height: 23px; background: #f2f3f3; display: flex; align-items: center; padding-left: 8px; flex: none; }
.title-ico { width: 14px; height: 14px; margin-right: 2px; }
.title-text { font-size: 11.400px; color: #222; }
.winctl { margin-left: auto; display: flex; align-items: center; }
.winctl svg { width: 10px; height: 10px; }
.wc-min { margin-right: 34px; }
.wc-max { margin-right: 37px; }
.wc-close { margin-right: 20px; }

.menubar { height: 21px; background: #fff; display: flex; align-items: center; padding-left: 8px; flex: none; font-size: 11.500px; }
.m { color: #222; }
.m-file { width: 34px; }
.m-data { width: 40px; }
.m-ws { width: 72px; }
.m-db { width: 73px; }
.m-st { width: 43px; }
.m-an { width: 59px; }
.m-map { width: 40px; }
.m-fo { width: 54px; }
.m-se { width: 48px; }
.m-wi { width: 60px; }

.banner { height: 40px; background: #cfe8fd; border-top: 1px solid #e1effb; display: flex; align-items: center; padding: 0 56px 2px 22px; flex: none; }
.mega { width: 13px; height: 13px; margin-right: 12px; }
.banner-text { font-size: 12.800px; color: #3c7ea8; }
.buy { margin-left: auto; font-size: 13px; color: #3c7ea8; }

/* toolbar */
.toolbar { height: 38px; flex: none; background: #f5f5f5; display: grid; align-items: center; justify-items: center;
  padding-top: 1px;
  grid-template-columns: 48px 1px 42px 22px 36px 6px 38px 28px 16px 26px 14px 28px 34px 6px 21px 23px 42px 22px 24px 22px 12px 30px 8px 36px 24px 119px 30px 16px 18px 28px 18px; }
.ti { width: 20px; height: 20px; overflow: visible; }
.td { width: 6px; height: 4px; }
.dim { opacity: .5; }
.sep { display: block; width: 1px; height: 34px; background: #d8d8d8; }
.fit { justify-self: end; width: 104px; height: 23px; border: 1px solid #cfcfcf; border-radius: 2px; display: flex; align-items: center; font-size: 13px; color: #555; background: #f5f5f5; }
.fit-label { flex: 1; padding-left: 7px; }
.fit-arrow { width: 19px; height: 21px; border-left: 1px solid #d8d8d8; display: flex; align-items: center; justify-content: center; }

/* main */
.main { flex: 1; display: flex; background: #f5f5f5; position: relative; min-height: 0; }

.format { width: 210px; margin-top: 1px; background: #fafafa; border-right: 1px solid #d4d4d4; border-top: 1px solid #d8d8d8; display: flex; flex-direction: column; padding-bottom: 13px; flex: none; }
.fmt-head { height: 27px; border-bottom: 1px solid #d4d4d4; display: flex; align-items: center; padding: 0 7px 0 18px; font-size: 13px; color: #111; flex: none; }
.fmt-head strong { font-weight: 600; }
.fmt-x { width: 8px; height: 8px; margin-left: auto; }
.fmt-tools { padding: 10px 0 0 18px; display: flex; align-items: center; box-sizing: content-box; height: 23px; flex: none; }
.fmt-a { width: 23px; height: 23px; border: 1px solid #bbb; display: flex; align-items: center; justify-content: center; color: #777; font-weight: 600; font-size: 12px; margin-right: 4px; }
.fi { width: 14px; height: 14px; margin-right: 9px; flex: none; }
.fmt-fields { margin-left: 16px; font-size: 12px; color: #444; display: flex; align-items: center; }
.fields-drop { width: 7px; height: 5px; margin-left: 4px; }
.fmt-tabs { height: 23px; margin-top: 11px; padding-left: 5px; border-bottom: 1px solid #aaa; display: flex; align-items: flex-end; font-size: 12px; color: #555; flex: none; }
.ftab { height: 21px; display: flex; align-items: center; justify-content: center; background: #f2f2f2; border: 1px solid #dedede; border-bottom: 0; }
.ftab-on { width: 58px; height: 23px; background: #fafafa; margin-bottom: -1px; padding-bottom: 1px; }
.ftab-rows { width: 52px; }
.ftab-cols { width: 72px; }
.fmt-body { padding-top: 6px; flex: 1; }
.fmt-h { margin: 0 0 10px 18px; height: 18px; line-height: 18px; font-size: 13px; font-weight: 600; color: #111; }
.fmt-h2 { margin-top: 13px; }
.frow { height: 22px; display: flex; align-items: center; margin-bottom: 8px; }
.frow:last-of-type { margin-bottom: 0; }
.flabel { width: 92px; text-align: right; font-size: 12px; color: #444; margin-top: -2px; }
.flabel-on { color: #111; font-weight: 600; font-size: 11.700px; }
.fsel { position: relative; width: 98px; height: 22px; margin-left: 5px; background: #fff; border: 1px solid #ececec; border-bottom: 1px solid #888; display: flex; align-items: center; padding-left: 1px; font-size: 12.500px; color: #555; white-space: nowrap; font-family: "Lato", sans-serif; letter-spacing: .25px; }
.fsel.o { color: #f7923a; }
.fsel.b { font-weight: 700; }
.chev { position: absolute; right: 5px; top: 8px; width: 10px; height: 6px; }
.clear { align-self: flex-start; width: 177px; height: 22px; margin-left: 19px; background: #fff; border: 1px solid #c8c8c8; border-radius: 3px; font: 12px "Open Sans", sans-serif; color: #333; padding: 0; }

/* cards */
.cards { width: 166px; padding: 2px 6px 0; display: flex; flex-direction: column; gap: 6px; flex: none; }
.card { background: #fafafa; border: 1px solid #d4d4d4; padding: 7px 6px 0; }
.card-t { display: block; height: 18px; line-height: 18px; font-size: 12.500px; color: #555; }
.card-pages { height: 62px; }
.card-filters { height: 78px; }
.card-marks { height: 223px; }
.markdrop { margin-top: 10px; height: 21px; border: 1px solid #d4d4d4; display: flex; align-items: center; font-size: 11.500px; color: #555; background: #fbfbfb; }
.mt { width: 13px; height: 13px; margin: 0 5px 0 11px; color: #333; flex: none; }
.markdrop-arrow { margin-left: auto; width: 18px; height: 19px; border-left: 1px solid #d4d4d4; display: flex; align-items: center; justify-content: center; }
.md { width: 6px; height: 4px; }
.markgrid { margin-top: 6px; display: grid; grid-template-columns: 43px 42px 43px; gap: 7px 6px; }
.mbtn { height: 42px; border: 1px solid #d4d4d4; display: flex; flex-direction: column; align-items: center; font-size: 9.500px; color: #555; padding-top: 7px; }
.mi { width: 14px; height: 14px; margin-bottom: 5px; color: #333; }
.markpill { margin-top: 14px; display: flex; align-items: center; }
.markpill .mt { margin: 0 5px 0 7px; }
.pill { display: flex; align-items: center; height: 20px; border-radius: 10px; color: #fff; font-size: 12px; }
.pill-g { background: #00b180; }
.pill-b { background: #4996b2; }
.pill-sum { width: 111px; padding-left: 11px; font-size: 13px; }

/* shelves and canvas */
.work { flex: 1; padding: 3px 4px 7px 0; display: flex; flex-direction: column; min-width: 0; }
.shelf { height: 27px; background: #fafafa; border: 1px solid #dcdcdc; border-right: 0; display: flex; align-items: center; flex: none; }
.shelf-r { margin-top: 7px; }
.shelf-l { width: 125px; height: 100%; border-right: 1px solid #dcdcdc; display: flex; align-items: center; padding-left: 6px; font-size: 12px; color: #555; }
.si { width: 12px; height: 12px; margin-right: 7px; }
.pill-shelf { width: 148px; margin-left: 2px; padding-left: 11px; }
.canvas { flex: 1; margin-top: 6px; background: #fff; border: 1px solid #b8b8b8; padding: 5px 0 0 5px; min-height: 0; }
.vtitle { height: 60px; border: 1px solid #b0b0b0; border-right: 0; padding-left: 5px; line-height: 58px; font-family: "Lato", sans-serif; font-size: 40px; color: #e15759; white-space: nowrap; }
.tbl { margin: 4px 0 0 4px; width: 641px; font-family: "Lato", sans-serif; font-size: 28.500px; color: #f28e2b; }
.tr { display: grid; grid-template-columns: 161px 120px 120px 120px 120px; height: 37px; align-items: center; white-space: nowrap; }
.tr > span, .tr > b { text-align: right; padding-right: 6px; overflow: hidden; }
.tr > .cat, .tr > .rl { text-align: left; padding-left: 6px; padding-right: 0; }
.tr-top { height: 30px; padding-bottom: 6px; }
.tr > .shipmode { grid-column: 2 / 6; text-align: center; font-weight: 700; font-size: 27.500px; padding-right: 0; }
.tr-head { height: 31px; border-bottom: 1px solid #c4c4c4; font-size: 29px; padding-bottom: 4px; }
.tr-band { background: #f5f5f5; }
.tr-last { border-bottom: 1px solid #c4c4c4; }

/* show me */
.showme { position: absolute; left: 1712px; top: 2px; width: 203px; height: 556px; background: #fafafa; border-left: 1px solid #dcdcdc; box-shadow: 1px 1px 3px rgba(0,0,0,.25); padding: 15px 0 0 13px; }
.sm-tab { position: absolute; top: -36px; right: 0; width: 110px; height: 37px; background: #fafafa; border: 1px solid #dcdcdc; border-bottom: 0; border-right: 0; box-shadow: 1px -1px 2px rgba(0,0,0,.12); display: flex; align-items: center; padding: 0 0 7px 11px; font-size: 12.500px; color: #333; }
.sm-ico { width: 14px; height: 14px; margin-right: 6px; }
.sm-grid { display: grid; grid-template-columns: repeat(3, 56px); grid-auto-rows: 42px; gap: 4px; }
.thumb { width: 56px; height: 42px; display: block; }
.fr { fill: #fff; stroke: #e2e2e2; }
.tiny { font: 3.500px "Open Sans", sans-serif; fill: #666; }
.ln { fill: none; stroke-width: 1.300; }
.lo { stroke: #fde4c8; stroke-width: 1.300; }
.lb { stroke: #cddcea; }
.sm-for { margin: 16px 0 6px 2px; height: 18px; line-height: 18px; font-size: 11.800px; color: #333; }
.sm-for b { font-weight: 600; color: #111; }
.sm-row { display: flex; align-items: center; height: 20px; margin: 0 0 8px 2px; }
.sm-n { width: 57px; font-size: 11.500px; color: #444; margin-top: 2px; }
.pill-dim { width: 90px; justify-content: center; }
.pill-mea { width: 79px; padding-left: 11px; }

/* bottom tabs and status */
.tabs { height: 30px; flex: none; background: #e6e6e6; border-top: 1px solid #d0d0d0; display: flex; font-size: 12px; color: #777; }
.tab { display: flex; align-items: center; justify-content: center; border-right: 1px solid #d0d0d0; }
.tab-ds { width: 130px; justify-content: flex-start; padding-left: 9px; }
.ds { width: 10px; height: 12px; margin-right: 5px; }
.tab-1 { width: 58px; }
.tab-2 { width: 57px; padding-right: 2px; }
.tab-3 { width: 78px; padding-right: 2px; }
.tab-on { width: 78px; background: #fafafa; color: #444; font-weight: 600; }
.tab-ic { width: 32px; }
.nt { width: 16px; height: 16px; }
.status { height: 21px; flex: none; background: #ececec; border-top: 1px solid #dcdcdc; border-bottom: 1px solid #cfcfcf; display: flex; align-items: center; padding-left: 4px; font-size: 11.200px; color: #333; }
.st-a { width: 66px; }
.st-b { width: 121px; }
.st-cells { margin-left: auto; display: flex; height: 100%; }
.cell { display: block; height: 100%; border-left: 1px solid #d0d0d0; }
.c1 { width: 127px; }
.c2 { width: 27px; }
.c3 { width: 47px; }
.nav { width: 72px; display: flex; align-items: center; padding-left: 8px; gap: 8px; }
.nav svg { width: 8px; height: 10px; }
.views { width: 67px; border-left: 1px solid #d0d0d0; display: flex; align-items: center; padding-left: 8px; gap: 10px; }
.views svg { width: 11px; height: 11px; }

/* taskbar */
.taskbar { position: relative; height: 48px; flex: none; background: #f2f3f3; display: flex; align-items: center; }
.weather { position: absolute; left: 20px; top: 0; height: 100%; display: flex; align-items: center; }
.wx { position: relative; width: 30px; height: 30px; }
.wx-ico { position: absolute; left: 0; top: 7px; width: 22px; height: 24px; }
.wx-badge { position: absolute; left: 10px; top: 1px; width: 16px; height: 16px; border-radius: 50%; background: #c42b1c; color: #fff; font-size: 10.500px; font-weight: 600; display: flex; align-items: center; justify-content: center; }
.wx-t { display: flex; flex-direction: column; font-size: 10.500px; line-height: 16px; color: #222; }
.haze { color: #555; }
.center { position: absolute; left: 0; top: 0; width: 1300px; height: 48px; }
.center > * { position: absolute; }
.start { left: 640px; top: 13px; width: 22px; height: 22px; }
.search { left: 675px; top: 9px; width: 219px; height: 30px; border-radius: 15px; background: #fcfcfc; border: 1px solid #e2e2e2; border-bottom-color: #cfcfcf; display: flex; align-items: center; padding-left: 11px; font-size: 13px; color: #666; }
.s-ico { width: 15px; height: 15px; margin-right: 10px; }
.tulips { margin-left: auto; margin-right: 3px; width: 48px; height: 28px; }
.tk { top: 13px; width: 24px; height: 24px; }
.tk-tv { left: 907px; width: 24px; height: 24px; top: 13px; }
.tk-co { left: 950px; }
.tk-ex { left: 995px; }
.tk-ed { left: 1039px; }
.tk-st { left: 1082px; }
.tk-q { left: 1127px; }
.tk-wd { left: 1171px; }
.tk-pb { left: 1217px; width: 19px; height: 24px; }
.tk-tb { left: 1252px; top: 5px; width: 36px; height: 39px; background: #fafafa; border: 1px solid #ececec; border-radius: 4px; display: flex; justify-content: center; padding-top: 8px; }
.tk-tb-i { width: 20px; height: 20px; }
.dot { top: 41px; width: 6px; height: 3px; border-radius: 2px; background: #777; }
.dot-ex { left: 1004px; }
.dot-wd { left: 1180px; }
.dot-pb { left: 1224px; }
.bluebar { left: 1262px; top: 41px; width: 16px; height: 3px; border-radius: 2px; background: #0f7fd2; }
.tray { position: absolute; left: 0; top: 0; width: 1920px; height: 48px; pointer-events: none; }
.tray > * { position: absolute; }
.t-chev { left: 1684px; top: 21px; width: 12px; height: 7px; }
.t-lang { left: 1708px; width: 40px; top: 9px; display: flex; flex-direction: column; align-items: center; font-size: 11px; line-height: 16px; color: #222; }
.t-wifi { left: 1758px; top: 18px; width: 16px; height: 12px; }
.t-vol { left: 1782px; top: 18px; width: 16px; height: 12px; }
.t-bat { left: 1805px; top: 18px; width: 16px; height: 12px; }
.t-time { right: 19px; top: 8px; display: flex; flex-direction: column; align-items: flex-end; font-size: 12px; line-height: 16px; color: #222; }
```
